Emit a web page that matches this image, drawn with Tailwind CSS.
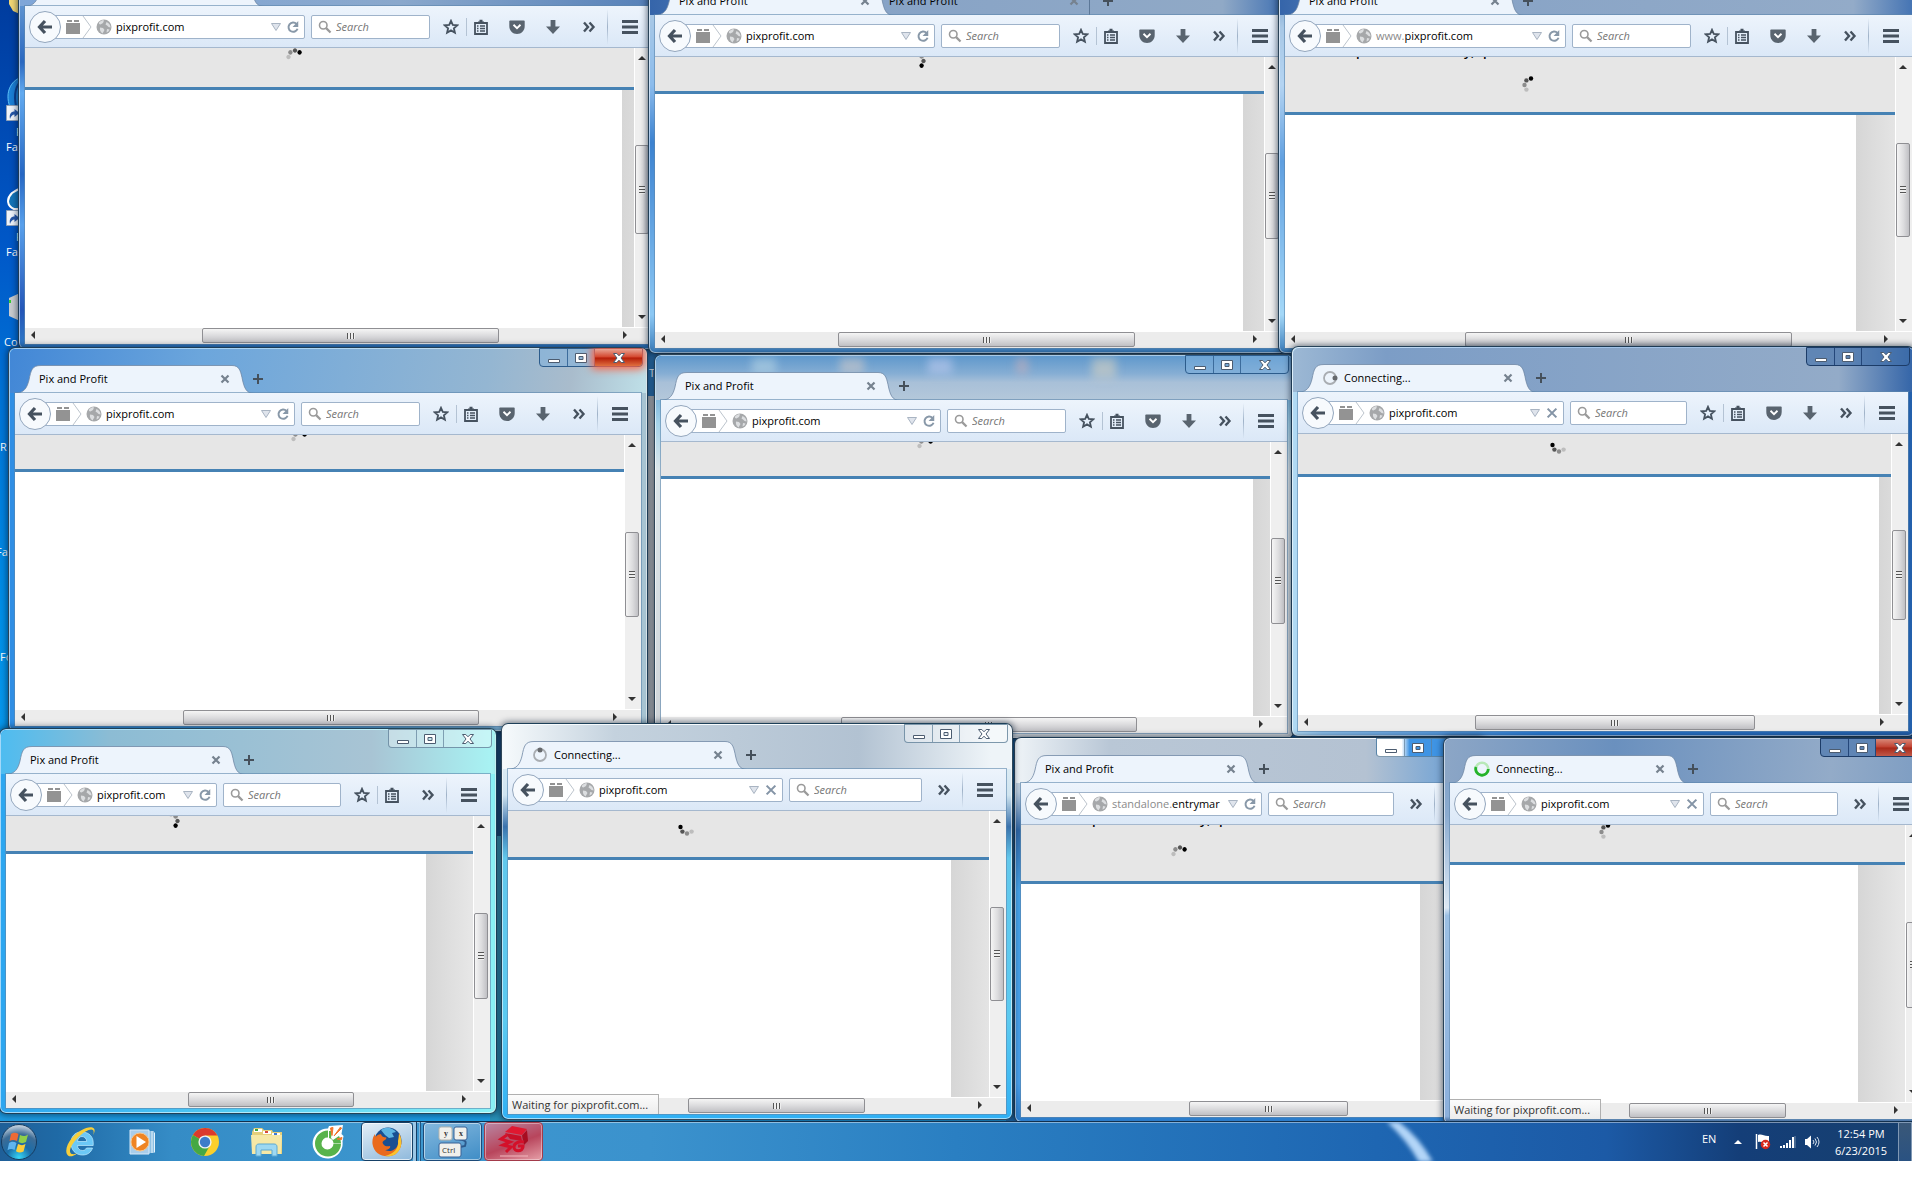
<!DOCTYPE html>
<html lang="en">
<head>
  <meta charset="utf-8">
  <title>Desktop</title>
  <script src="https://cdn.jsdelivr.net/npm/@tailwindcss/browser@4"></script>
</head>
<body class="h-screen flex flex-col pr-2 pb-[39px] bg-white overflow-hidden text-[11px] leading-4 text-black font-['Open_Sans','Noto_Sans',sans-serif]">

  <svg class="hidden">
    <symbol id="back" viewBox="0 0 16 16"><path d="M8 2 2.500 8 8 14M3 8h12" fill="none" stroke="#46525f" stroke-width="3.200"/></symbol>
    <symbol id="addon" viewBox="0 0 14 14"><path d="M0 3h14v11H0zM1 0h5v2H1zM8 0h5v2H8z" fill="#939393"/></symbol>
    <symbol id="globe" viewBox="0 0 16 16"><circle cx="8" cy="8" r="7.500" fill="#a6a8aa"/><path d="M3 3.500c2-2 4-2.400 5-2L7 4 4.500 5.500 3 5zM10.500 3c2.500 1 4 3 4.100 5.500l-2-.5-1.600-1.500-1.500-1zM4 8.500l3 .5 1.500 2-2 3.500C4.500 13 3.500 11 4 8.500zM11 10l2.500.5c-.5 1.500-1.500 2.500-3 3z" fill="#dcdee0"/></symbol>
    <symbol id="drop" viewBox="0 0 12 10"><path d="M1.500 1.500h9L6 8.500z" fill="#dfe4ec" stroke="#a9b4c2"/></symbol>
    <symbol id="reload" viewBox="0 0 16 16"><path d="M12 4.500A5.300 5.300 0 1 0 13.200 10" fill="none" stroke="#8898a8" stroke-width="2.200"/><path d="M14 1v7H7.500z" fill="#8898a8"/></symbol>
    <symbol id="stop" viewBox="0 0 16 16"><path d="m3 3 10 10M13 3 3 13" stroke="#8494a6" stroke-width="2.400"/></symbol>
    <symbol id="lens" viewBox="0 0 16 16"><circle cx="6" cy="6" r="4.300" fill="none" stroke="#9a9a9a" stroke-width="1.800"/><path d="m9.300 9.300 5 5" stroke="#9a9a9a" stroke-width="2.600"/></symbol>
    <symbol id="star" viewBox="0 0 16 16"><path d="m8 1.800 1.800 4.100 4.500.4-3.400 3 1 4.400L8 11.400l-3.900 2.300 1-4.400-3.400-3 4.500-.4z" fill="none" stroke="#46525f" stroke-width="1.800"/></symbol>
    <symbol id="clip" viewBox="0 0 16 16"><path d="M2 4h12v11H2z" fill="none" stroke="#46525f" stroke-width="1.800"/><path d="M5 5V2.500h1.500V.8h3v1.700H11V5z" fill="#46525f"/><path d="M4 7h1.500M7 7h5M4 9.500h1.500M7 9.500h5M4 12h1.500M7 12h5" stroke="#46525f" stroke-width="1.400"/></symbol>
    <symbol id="pocket" viewBox="0 0 16 16"><path d="M1.200 1.500h13.600c.6 0 .9.400.9.900V7c0 4.500-3.300 8-7.700 8S.3 11.500.3 7V2.400c0-.5.3-.9.900-.9z" fill="#59646f"/><path d="m4.500 5.800 3.500 3.300 3.500-3.300" fill="none" stroke="#fff" stroke-width="1.900"/></symbol>
    <symbol id="down" viewBox="0 0 16 16"><path d="M5.600 1h4.800v6.500H15l-7 7.500-7-7.500h4.600z" fill="#59646f"/></symbol>
    <symbol id="more" viewBox="0 0 16 16"><path d="m3 3.500 4 4.500-4 4.500M8.500 3.500l4 4.500-4 4.500" fill="none" stroke="#46525f" stroke-width="2.400"/></symbol>
    <symbol id="menu" viewBox="0 0 18 16"><path d="M1 2.500h16M1 8h16M1 13.500h16" stroke="#46525f" stroke-width="2.800"/></symbol>
    <symbol id="tabx" viewBox="0 0 10 10"><path d="m1.500 1.500 7 7M8.500 1.500l-7 7" stroke="#76828f" stroke-width="2.200"/></symbol>
    <symbol id="plus" viewBox="0 0 12 12"><path d="M6 1v10M1 6h10" stroke="#45505b" stroke-width="2"/></symbol>
    <symbol id="tab" viewBox="0 0 240 29"><path d="M0 28.500C9 28 12 23 14 15 16 5 17 .5 26 .5h191c7 0 8.500 5 10 12 2 10 4 16 12 16z" fill="#edf4fc" stroke="#7088a4" stroke-width=".8"/><path d="M1 28h238v1H1z" fill="#e9f2fb"/></symbol>
    <symbol id="capmin" viewBox="0 0 14 12"><path d="M1.500 7.500h11v3h-11z" fill="#fff" stroke="#4c5c70"/></symbol>
    <symbol id="capmax" viewBox="0 0 14 12"><path d="M1.500 1.500h11v9h-11zM5 4.500v3h4v-3z" fill="#fff" fill-rule="evenodd" stroke="#4c5c70"/></symbol>
    <symbol id="capx" viewBox="0 0 14 12"><path d="M1.500 1.500h3.300L7 3.800l2.200-2.300h3.300L9 6l3.500 4.500H9.200L7 8.200l-2.200 2.300H1.500L5 6z" fill="#fff" stroke="#4c5c70"/></symbol>
    <symbol id="shortcut" viewBox="0 0 16 16"><path d="M.5.5h15v15H.5z" fill="#eef3fa" stroke="#8fa0b8"/><path d="M4 14C3 9 5 6.500 8.500 6.500V4l5 4-5 4V9.500C6.500 9.500 5 11 4 14z" fill="#2456a8"/></symbol>
  </svg>

  <main id="desktop" class="relative flex-1 overflow-hidden bg-[linear-gradient(180deg,#003c9e_0%,#0058c8_22%,#0072d6_35%,#008fe8_55%,#0a9cf0_70%,#1c9ae0_100%)]">
    <!-- shortcuts whose names show past the windows -->
    <svg class="absolute left-2 top-0" width="14" height="16" viewBox="0 0 14 16"><path d="M1 0h13v15L5 11 1 4z" fill="#f2d774"/></svg>
    <svg class="absolute left-1.5 top-[76px]" width="18" height="32" viewBox="0 0 18 32"><path d="M18 1C6 2-2 16 4 31h14z" fill="#1b7fd6" stroke="#5cc0f8"/><path d="M16 4C9 10 8 20 10 30" fill="none" stroke="#0a3f90" stroke-width="2"/></svg>
    <svg class="absolute left-1.5 top-[105px] size-4"><use href="#shortcut"/></svg>
    <p class="absolute left-4 top-[124px] text-white">F</p>
    <p class="absolute left-1.5 top-[139px] text-white">Fa</p>
    <svg class="absolute left-1.5 top-[186px]" width="18" height="24" viewBox="0 0 18 24"><path d="M18 1C12 3 9 5 6 7c-6 6-5 13 2 16h10z" fill="#1274b8" stroke="#fff" stroke-width="2"/></svg>
    <svg class="absolute left-1.5 top-[210px] size-4"><use href="#shortcut"/></svg>
    <p class="absolute left-4 top-[229px] text-white">F</p>
    <p class="absolute left-1.5 top-[244px] text-white">Fa</p>
    <svg class="absolute left-2 top-[292px]" width="14" height="30" viewBox="0 0 14 30"><path d="M1 6 12 1v28L1 24z" fill="#c9cccf"/><path d="M2 8v3" stroke="#3c3" stroke-width="2"/></svg>
    <p class="absolute left-1 top-[334px] text-white">Co</p>
    <p class="absolute left-0 top-[439px] text-white">R</p>
    <p class="absolute -left-1 top-[544px] text-white">Fa</p>
    <p class="absolute left-0 top-[649px] text-white">Fo</p>

    <!-- edges of the windows lying underneath -->
    <div class="absolute left-[640px] top-[349px] w-[660px] h-[392px] bg-[#b4b6b8] border-t-[47px] border-[#2c71ad]"></div>
    <p class="absolute left-[649px] top-[365px] text-white">T</p>
    <div class="absolute left-[490px] top-[732px] w-8 h-[104px] bg-[#1d4c78]"></div>
    <div class="absolute left-[490px] top-[836px] w-8 h-[300px] bg-[linear-gradient(#3f9cb8,#2791b8)]"></div>
    <div class="absolute left-[1006px] top-[739px] w-4 h-[382px] bg-[#1f6cae]"></div>
    <div class="absolute left-[1290px] top-[731px] w-[630px] h-4 bg-[#1c78d8]"></div>
  </main>

  <footer class="flex h-10 shrink-0 items-stretch overflow-hidden border-t border-[#12304e] shadow-[inset_0_1px_0_#ffffff70] text-white bg-[linear-gradient(90deg,#1f5f98_0,#1f6aa6_3%,#358cc6_9%,#3d97cf_22%,#3b92cd_34%,#2a7fc2_50%,#1e66b2_72%,#1c5aa6_84%,#143e78_91%,#17406f_100%)]">
    <nav class="flex items-stretch">
      <button class="w-[50px]" aria-label="Start">
        <svg width="38" height="38" viewBox="0 0 38 38">
          <defs><radialGradient id="orb" cx=".5" cy=".95" r=".9"><stop offset="0" stop-color="#35d8f8"/><stop offset=".4" stop-color="#1a6ca8"/><stop offset=".75" stop-color="#3d6c96"/><stop offset="1" stop-color="#b8c8d8"/></radialGradient></defs>
          <circle cx="19" cy="19" r="17.500" fill="url(#orb)" stroke="#163c60"/>
          <path d="M11 11c3-2 5-1.500 7.500 0l-1.500 7c-3-1.500-5-1.500-7.500 0z" fill="#ee6a35"/>
          <path d="M20 12c3 1.500 5 1.500 8-.5l-2 7.500c-3 1.500-5 1.500-7.500 0z" fill="#8fcf4a"/>
          <path d="M9 20c3-1.800 5-1.500 7.500 0l-2 7c-2.500-1.500-4.500-1.500-7 .3z" fill="#5fb4ee"/>
          <path d="M18 21c3 1.500 5 1.500 7.500 0l-2 7.500c-3 1.500-5 1.200-7.500-.3z" fill="#fbcd3b"/>
        </svg>
      </button>
      <button class="w-[62px] grid place-items-center" aria-label="Internet Explorer">
        <svg width="32" height="32" viewBox="0 0 32 32"><path d="M16.500 6C9 6 6 11.500 6 17c0 7 4.500 12 11.500 12 5 0 8.500-2.500 10-7h-6c-1 1.800-2.200 2.500-4 2.500-3 0-5-2-5-5h15.700C29 11 24.500 6 16.500 6zm-4 9.500c.3-3 2-5 4.500-5s4.600 2 4.700 5z" fill="#6cc8f6" stroke="#c2ecff" stroke-width=".7"/><path d="M29 2.500C25-1 14 4 7 12 1.500 18.500-.5 26 3 29.500c2 1.800 6 .5 9-2-3 1-5.500 1-6.500-.5-2-3 2-10 8-16S26 2 28 4c1 1 .8 3 .3 5 1.300-2.500 1.800-5 .7-6.500z" fill="#f7cf3c"/></svg>
      </button>
      <button class="w-[61px] grid place-items-center" aria-label="Media Player">
        <svg width="28" height="28" viewBox="0 0 28 28"><path d="M5 3h20v22H5z" fill="#8cbfe2"/><path d="M23 3v22M25.500 4.500v20" stroke="#e5f3fc"/><path d="M1 2h19v24H1z" fill="#a9cdea" stroke="#d6eafa"/><circle cx="11" cy="14" r="9" fill="#ef8423" stroke="#f8c78d"/><path d="M7.500 8v12l9.500-6z" fill="#fff"/></svg>
      </button>
      <button class="w-[63px] grid place-items-center" aria-label="Chrome">
        <svg width="30" height="30" viewBox="0 0 30 30"><circle cx="15" cy="15" r="14" fill="#fbcf2b"/><path d="M15 15 2.900 8A14 14 0 0 1 27.400 8.500H15z" fill="#dc3a2c"/><path d="M2.900 8A14 14 0 0 0 14 29l6.200-11L15 15z" fill="#45a845"/><circle cx="15" cy="15" r="6.600" fill="#f2f2f2"/><circle cx="15" cy="15" r="5.200" fill="#3d7cc9"/></svg>
      </button>
      <button class="w-[61px] grid place-items-center" aria-label="Explorer">
        <svg width="34" height="32" viewBox="0 0 34 32"><path d="M2 6 4 2h8l2 2h8l1 2h9v22H2z" fill="#e5cf7a"/><path d="M4 3h8v3H4zM13 5h8v3h-8zM22 7h8v3h-8z" fill="#fff"/><path d="M5 3h3v2H5z" fill="#3da63d"/><path d="M15 5h3v2h-3z" fill="#d84a3c"/><path d="M24 7h3v2h-3z" fill="#3d7ad8"/><path d="M1 9h31l-1 19H2z" fill="#f6e8a6"/><path d="M6 30V21c0-2 1-3 3-3h15c2 0 3 1 3 3v9h-5v-6H11v6z" fill="#9dd8f2" stroke="#5ca9d2"/></svg>
      </button>
      <button class="w-[64px] grid place-items-center" aria-label="Coc Coc">
        <svg width="34" height="34" viewBox="0 0 34 34"><path d="M16 3.500 17 1l14-1-1.500 9 2 2-1 5.500A15 15 0 1 1 16 3.500z" fill="#fff"/><path d="M16 5.500A13 13 0 1 0 29 18.500h-7.500A6 6 0 1 1 16 12.500z" fill="#58b34b"/><path d="M17 6v7a6 6 0 0 1 4.500 5H29a13 13 0 0 0-2-7l-6 4-2-2 1-7z" fill="#58b34b"/><path d="m18.500 3 2.500-.5-1 8zM28.500 2l1 1.500L22 11zM25 14l5-1.500-.5 2z" fill="#f1762b" stroke="#f1762b"/><circle cx="16" cy="18.500" r="3" fill="#fff"/></svg>
      </button>
      <button class="w-[52px] grid place-items-center rounded-sm border border-[#164066] bg-[linear-gradient(160deg,#e4eef6,#8fb9dc)] shadow-[inset_0_0_0_1px_#ffffffb0]" aria-label="Firefox">
        <svg width="32" height="32" viewBox="0 0 32 32"><circle cx="17" cy="15" r="13.500" fill="#194f92"/><path d="M10 4c5-4 12-2 15 2l-4 1 2 4-5 1-4-3z" fill="#5db4e2"/><path d="M28 7c4 8 3 17-4 21.500C15 33 3 29 1.500 18 1 13 2.500 10 4 8c0 1.500.3 2 .8 2.800C6 9 8 8 10 8.300c1 1.700 1 2.700 3.500 2.900C16 11.300 16 12 14 14c-2 1-3 2-2 3.700 1 2 4 3.300 7 2.300 1 2-2 4-5 4 6 3 12-1 13-6 1-4 .5-7 1-11z" fill="#ea6a1d"/><path d="M28 7c4 8 3 17-4 21.500-3 1.700-7 2.100-10 1.500 9-2 14-8 13-15 .8-3 1-5 1-8z" fill="#fac32d"/></svg>
      </button>
      <div class="mr-0.5 flex gap-0.5"><span class="w-1 border-r border-[#143d66] bg-[#9cc6e4]"></span><span class="w-0.5 border-r border-[#1f5580] bg-[#7fb4dc]"></span></div>
      <button class="w-[59px] grid place-items-center rounded-sm border border-[#1d4a78] bg-[linear-gradient(160deg,#84b8de,#3f8dc6)] shadow-[inset_0_0_0_1px_#ffffff80]" aria-label="Keyboard">
        <svg width="32" height="32" viewBox="0 0 32 32" font-family="Liberation Serif" font-size="8" font-weight="bold" fill="#333"><path d="M22 13c6 2 8 1 6 7l-5 1" fill="none" stroke="#2c5a8c" stroke-width="2"/><rect x="2" y="1" width="13" height="13" rx="2" fill="#f0f0ec" stroke="#b4b4ae"/><rect x="17" y="1" width="13" height="13" rx="2" fill="#f0f0ec" stroke="#3a6396"/><rect x="2" y="17" width="22" height="14" rx="2" fill="#f0f0ec" stroke="#3a6396"/><text x="7" y="10">y</text><text x="22" y="10">x</text><text x="5" y="27" font-family="Open Sans" font-weight="400">Ctrl</text></svg>
      </button>
      <button class="ml-0.5 w-[59px] grid place-items-center rounded-sm border border-[#a33a4a] bg-[linear-gradient(160deg,#b888a4,#b8455c_55%,#e6a0a8)] shadow-[inset_0_0_0_1px_#ffffff60]" aria-label="3G">
        <svg width="34" height="34" viewBox="0 0 34 34"><path d="M8 7 15 1l15 3-5 6z" fill="#e01830"/><path d="M25 10.500 30 5l1 11-4 4z" fill="#a80c20"/><path d="M8 8l16 3 1 5-12-2z" fill="#c81028"/><path d="M10 10 4 14l9 3-7 3 8 2-5 5" fill="none" stroke="#d4102a" stroke-width="3"/><path d="M27 17c-5-1-10 1-10 5 0 5 8 5 9 0v-1h-5" fill="none" stroke="#d4102a" stroke-width="3"/><path d="M3 31h28" stroke="#f2b6bd"/></svg>
      </button>
    </nav>
    <div class="relative flex-1">
      <!-- wallpaper ray showing through the glass -->
      <svg class="absolute left-[836px] top-0 h-10 w-20 blur-[2px]" viewBox="0 0 80 40"><path d="M8 0h12q20 15 34 40H40Q28 18 8 0z" fill="#b4d6f8"/></svg>
    </div>
    <div class="flex items-center">
      <button class="w-6 text-left -mt-1.5">EN</button>
      <button class="w-6 grid place-items-center" aria-label="Show hidden icons"><svg width="10" height="6" viewBox="0 0 10 6"><path d="M1 5h8L5 1z" fill="#fff"/></svg></button>
      <button class="w-[26px] grid place-items-center" aria-label="Action Center"><svg width="16" height="17" viewBox="0 0 16 17"><path d="M1.500 1v15" stroke="#fff" stroke-width="1.500"/><path d="M3 2c4-1.500 6 1.500 11 1v7c-5 .5-7-2-11-1z" fill="#fff"/><circle cx="10.500" cy="11.500" r="4.700" fill="#d8281c"/><path d="m8.500 9.500 4 4M12.500 9.500l-4 4" stroke="#fff" stroke-width="1.500"/></svg></button>
      <button class="w-6 grid place-items-center" aria-label="Network"><svg width="16" height="14" viewBox="0 0 16 14"><path d="M0 11h2v2H0zM3 10h2v3H3zM6 8h2v5H6zM9 5h2v8H9z" fill="#fff"/><path d="M12 2h2v11h-2z" fill="#fff"/><path d="M15 1v12" stroke="#7890ac"/></svg></button>
      <button class="w-6 grid place-items-center" aria-label="Volume"><svg width="16" height="14" viewBox="0 0 16 14"><path d="M1 4h2l4-3.500v13L3 10H1z" fill="#fff"/><path d="M9 5q2 2 0 4M11 3.500q3 3.500 0 7M13 2q4 5 0 10" fill="none" stroke="#dfe8f2"/></svg></button>
      <time class="w-[74px] text-center leading-[17px]">12:54 PM<br>6/23/2015</time>
      <button class="w-3.5 h-10 border border-[#8098b4] bg-[linear-gradient(#3a5878,#2a5282)]" aria-label="Show desktop"></button>
    </div>
  </footer>

<script>
const LIGHT_CAPTION = "border-[#5f7f98]/80 bg-white/35 divide-[#5f7f98]/70";
const DARK_CAPTION = "border-[#1c3c68] bg-[#3f6ea8]/60 divide-[#24477a]";
const SKY_CAPTION = "border-[#2c5c8c] bg-[#7cb0de]/50 divide-[#3c6c9c]";

// l/t/r/b are the client area, t being the toolbar's top edge.
// bar: bottom of the grey header, page: right edge of the white page,
// h/v: scroll thumb ranges, dots: spinner centre and turn
const windows = [
  { l: 25, t: 6, r: 651, b: 344, bar: 87, page: 622, h: [202, 499], v: [145, 234], dots: [295, 57, 45], search: 119, tabs: [""], icons: 5,
    caption: DARK_CAPTION, frame: "bg-[linear-gradient(180deg,#6fa0d8_0,#5d92d0_12%,#2a68c0_26%,#62aaf0_34%,#2667c4_55%,#58a0ec_68%,#2456b8_90%,#2f7cc8_100%)]", glass: "bg-[linear-gradient(90deg,#7fa6d8,#8aa8cc_60%,#5580b8)]" },
  { l: 655, t: 15, r: 1281, b: 348, bar: 91, page: 1243, h: [838, 1135], v: [153, 239], dots: [917, 61, 135], search: 119, tabs: ["Pix and Profit", "Pix and Profit"], icons: 5,
    caption: DARK_CAPTION, frame: "bg-[linear-gradient(180deg,#5c88bc_0,#a8c8e6_12%,#8cbcec_30%,#3c82d0_45%,#8cc8f4_90%,#3a7cba_100%)]", glass: "bg-[linear-gradient(90deg,#3565aa,#87a3c6_35%,#90a9c6_90%,#3f70b2)]" },
  { l: 1285, t: 15, r: 1912, b: 348, bar: 112, page: 1856, h: [1465, 1792], v: [143, 237], dots: [1531, 85, 0], search: 119, tabs: ["Pix and Profit"], icons: 5, host: "www.", note: true,
    caption: DARK_CAPTION, frame: "bg-[linear-gradient(180deg,#5c88bc_0,#a8c8e6_15%,#b4d4f2_30%,#5f9fe0_50%,#a4d8f8_90%,#3a7cba_100%)]", glass: "bg-[linear-gradient(90deg,#3565aa,#87a3c6_25%,#93abc8_90%,#3f70b2)]" },
  { l: 15, t: 393, r: 641, b: 726, bar: 469, page: 624, h: [183, 479], v: [532, 617], dots: [300, 439, 45], search: 119, tabs: ["Pix and Profit"], icons: 5, hot: true,
    caption: SKY_CAPTION, frame: "bg-[linear-gradient(90deg,#2f8ee4_0,#3a9ae0_40%,#a8c4d2_100%)]", glass: "bg-[linear-gradient(100deg,#4287d6_0,#6ca6dc_30%,#94b6d2_75%,#a9bccc_88%,#bfe0e8_100%)]" },
  { l: 661, t: 400, r: 1287, b: 733, bar: 476, page: 1253, h: [841, 1137], v: [538, 624], dots: [926, 446, 45], search: 119, tabs: ["Pix and Profit"], icons: 5, ghosts: true,
    caption: SKY_CAPTION, frame: "bg-[linear-gradient(180deg,#3a86c8_0,#a6d4ea_18%,#dce6ea_30%,#cfd4d8_100%)]", glass: "bg-[linear-gradient(180deg,#5f98cc_0,#86aed4_40%,#a8c0d8_60%,#b4c8da_100%)]" },
  { l: 1298, t: 392, r: 1908, b: 731, bar: 474, page: 1879, h: [1475, 1755], v: [530, 620], dots: [1559, 445, 270], search: 117, tabs: ["Connecting..."], icons: 5, load: 0,
    caption: DARK_CAPTION, frame: "bg-[linear-gradient(90deg,#b4dcf4_0,#8cc0ec_5%,#2a7cd4_40%,#2360ac_100%)]", glass: "bg-[linear-gradient(90deg,#9cb8d4_0,#7c9dc6_15%,#93abc8_88%,#3465a8_100%)]" },
  { l: 6, t: 774, r: 490, b: 1108, bar: 851, page: 426, h: [188, 354], v: [913, 999], dots: [171, 821, 135], search: 118, tabs: ["Pix and Profit"], icons: 2,
    caption: LIGHT_CAPTION, frame: "bg-[linear-gradient(90deg,#2ca6f0_0,#54ccf2_50%,#8cf2f6_100%)]", glass: "bg-[linear-gradient(90deg,#4ebcf0_0,#8cbcd4_22%,#a8c4d4_75%,#a8f4f4_100%)]" },
  { l: 1021, t: 783, r: 1478, b: 1117, bar: 881, page: 1420, h: [1189, 1348], v: [920, 1000], dots: [1180, 854, 45], search: 126, tabs: ["Pix and Profit"], icons: 0, host: "standalone.", url: "entrymar", note: true,
    caption: "border-[#5f7f98]/80 bg-[linear-gradient(90deg,#fff_0,#fff_24%,#3f94e4_32%,#3f94e4_100%)] divide-[#5f7f98]/70", frame: "bg-[linear-gradient(180deg,#e8eef2_0,#b8cadc_14%,#2f66a4_24%,#46a4ea_40%,#48a0ec_90%,#2a7ac8_100%)]", glass: "bg-[linear-gradient(90deg,#eef3f7_0,#b9c7d6_20%,#b4c2d2_75%,#7da8d4_90%)]" },
  { l: 508, t: 769, r: 1006, b: 1114, bar: 857, page: 951, h: [688, 865], v: [907, 1001], dots: [687, 827, 270], search: 133, tabs: ["Connecting..."], icons: 0, load: -90, status: true,
    caption: LIGHT_CAPTION, frame: "bg-[linear-gradient(180deg,#eef6fa_0,#cfe4f0_18%,#3a72ac_26%,#62c8ec_34%,#5ccaf0_75%,#30b0f4_100%)]", glass: "bg-[linear-gradient(90deg,#f6fafc_0,#c4d2de_22%,#b2c2d2_70%,#eef4f8_96%)]" },
  { l: 1450, t: 783, r: 1922, b: 1119, bar: 862, page: 1858, h: [1629, 1786], v: [922, 1008], dots: [1608, 832, 0], search: 128, tabs: ["Connecting..."], icons: 0, load: "green", status: true, red: true,
    caption: DARK_CAPTION, frame: "bg-[linear-gradient(180deg,#7c9cc4_0,#8cacd0_20%,#dce8f4_44%,#9cc0e4_46%,#8cb0dc_98%,#1d4a80_100%)]", glass: "bg-[linear-gradient(95deg,#8ca6c6_0,#6a90be_35%,#93abc8_80%,#7c9cc2_100%)]" },
];

const icon = (name, cls) => `<svg class="${cls}"><use href="#${name}"/></svg>`;
const tool = (name, label, slot) => `<button class="${slot} h-full grid place-items-center" aria-label="${label}">${icon(name, "size-4")}</button>`;
const loading = (w) => w.load !== undefined;

function loader(w) {
  if (!loading(w)) return "";
  if (w.load === "green") return `<svg class="size-4 mr-1.5" viewBox="0 0 16 16"><circle cx="8" cy="8" r="6.300" fill="none" stroke="#b8e8b8" stroke-width="2.600"/><path d="M14.300 8A6.300 6.300 0 1 1 2 6" fill="none" stroke="#25b32b" stroke-width="2.800"/></svg>`;
  return `<svg class="size-4 mr-1.5" viewBox="0 0 16 16"><g transform="rotate(${w.load} 8 8)"><circle cx="8" cy="8" r="6" fill="none" stroke="#a9adb2" stroke-width="1.800"/><circle cx="13" cy="8" r="2.500" fill="#66696d"/></g></svg>`;
}

function tab(w, title, i) {
  const shape = i === 0 ? icon("tab", "absolute left-0 bottom-0 w-[240px] h-[29px] -mb-px") : "";
  const slot = i === 0 ? "w-[225px] pl-6" : "w-[210px] pl-[9px] border-r border-[#5c7898]";
  return `<div class="relative ${slot} h-7 flex items-center">
    ${shape}
    <div class="relative flex flex-1 items-center pr-2.5">
      ${loader(w)}<span class="flex-1">${title}</span>
      <button aria-label="Close tab">${icon("tabx", "size-2.5")}</button>
    </div>
  </div>`;
}

function toolbar(w) {
  const url = w.url || "pixprofit.com";
  return `<div class="relative flex items-center h-[42px] pt-px border-b border-[#a5b8ce] bg-[linear-gradient(#edf4fc,#dbe8f7)]">
    <button class="relative z-10 ml-1 size-8 shrink-0 grid place-items-center rounded-full border border-[#93a6bd] bg-[#f7fafd]" aria-label="Back">${icon("back", "size-4")}</button>
    <div class="flex flex-1 min-w-0 items-center h-6 -ml-2 pl-3 pr-1 bg-white border border-[#9fb3ca] rounded-xs">
      ${icon("addon", "size-3.5 shrink-0")}
      <svg class="w-2.5 h-[22px] shrink-0 ml-0.5" viewBox="0 0 10 22"><path d="M1 0l8 11-8 11" fill="none" stroke="#bcc4cc"/></svg>
      ${icon("globe", "size-4 shrink-0 ml-1 mr-1")}
      ${w.host ? `<span class="text-[#8a8a8a]">${w.host}</span>` : ""}
      <input class="flex-1 min-w-0 outline-none bg-transparent" aria-label="Address" value="${url}">
      <button class="mx-1 shrink-0" aria-label="History">${icon("drop", "w-3 h-2.5")}</button>
      <button class="shrink-0" aria-label="Reload">${icon(loading(w) ? "stop" : "reload", "size-3.5")}</button>
    </div>
    <label class="flex items-center shrink-0 h-6 ml-1.5 pl-1.5 gap-1 bg-white border border-[#9fb3ca] rounded-xs" style="width:${w.search}px">
      ${icon("lens", "size-3.5 shrink-0")}
      <input class="w-full min-w-0 outline-none italic placeholder:text-[#757575]" placeholder="Search" aria-label="Search">
    </label>
    <div class="flex items-center h-full shrink-0 ${w.icons ? "pl-1.5" : "pl-1"}">
      ${w.icons ? tool("star", "Bookmark", "w-[30px]") + `<span class="w-px h-[18px] bg-[#b4c3d4]"></span>` + tool("clip", "Bookmarks list", "w-7 mr-1") : ""}
      ${w.icons > 2 ? tool("pocket", "Pocket", "w-9") + tool("down", "Downloads", "w-9") : ""}
      ${tool("more", "More tools", "w-9")}
      <span class="w-px h-9 bg-[linear-gradient(transparent,#9fb2c8,transparent)]"></span>
      <button class="w-[43px] grid place-items-center" aria-label="Menu">${icon("menu", "w-[18px] h-4")}</button>
    </div>
  </div>`;
}

function render(w) {
  const top = w.t + 42;
  const [cx, cy, turn] = w.dots;
  const closeBg = w.hot ? "bg-[linear-gradient(#e8a494,#d4452c_48%,#b41c08_52%,#e07040)] shadow-[0_0_8px_3px_#ff6040]" : w.red ? "bg-[linear-gradient(#d88878,#c04030_48%,#a82818_52%,#c05848)]" : "";
  return `<section class="absolute flex flex-col px-1.5 pb-[5px] rounded-[7px] overflow-hidden border border-[#1c3448]/90 shadow-[0_0_6px_1px_#00142890,inset_0_0_0_1px_#ffffff90] ${w.frame}"
      style="left:${w.l - 7}px;top:${w.t - 46}px;width:${w.r - w.l + 14}px;height:${w.b - w.t + 52}px">
    <header class="relative flex h-11 shrink-0 -mx-[5px] mt-px px-[5px] items-end rounded-t-md ${w.glass}">
      ${w.ghosts ? `<div class="absolute inset-x-16 top-0.5 flex justify-around blur-[4px] opacity-50"><i class="w-6 h-4 bg-[#c0dce8]"></i><i class="w-6 h-4 bg-[#dccfc8]"></i><i class="w-6 h-4 bg-[#c8d0f4]"></i><i class="w-3 h-4 bg-[#d0b0b8]"></i><i class="w-6 h-5 bg-[#e4d8c0]"></i><i class="size-4"></i></div>` : ""}
      ${w.tabs.map((title, i) => tab(w, title, i)).join("")}
      <button class="ml-3 mb-2" aria-label="New tab">${icon("plus", "size-3")}</button>
      <div class="absolute right-[3px] -top-px flex h-[19px] divide-x border rounded-b-[4px] ${w.caption}">
        <button class="w-7 grid place-items-center" aria-label="Minimize">${icon("capmin", "w-3.5 h-3")}</button>
        <button class="w-[27px] grid place-items-center" aria-label="Maximize">${icon("capmax", "w-3.5 h-3")}</button>
        <button class="w-[47px] grid place-items-center rounded-br-[3px] ${closeBg}" aria-label="Close">${icon("capx", "w-3.5 h-3")}</button>
      </div>
    </header>
    <div class="relative flex flex-1 flex-col min-h-0 ring-1 ring-[#5c86ac]/60 bg-[#ededed]">
      ${toolbar(w)}
      <div class="flex flex-1 min-h-0">
        <div class="flex flex-1 flex-col relative overflow-hidden">
          <div class="bg-[#e6e6e6] border-b-[3px] border-[#4682b4] box-content" style="height:${w.bar - top}px">
            ${w.note ? `<p class="absolute left-[70px] -top-3.5 flex text-[13px] font-semibold"><span class="w-[109px] pl-px">p</span><span class="w-[19px]">y,</span><span>p</span></p>` : ""}
            <svg class="absolute size-5 blur-[0.4px]" style="left:${cx - w.l - 10}px;top:${cy - top - 10}px" viewBox="-10 -10 20 20"><g transform="rotate(${turn})"><circle cy="-6.500" r="2.200"/><circle cx="-4.600" cy="-4.600" r="2.200" fill="#555"/><circle cx="-6.500" r="2.200" fill="#8c8c8c"/><circle cx="-4.600" cy="4.600" r="2.200" fill="#bdbdbd"/></g></svg>
          </div>
          <div class="flex flex-1">
            <div class="bg-white" style="width:${w.page - w.l}px"></div>
            <div class="flex-1 bg-[linear-gradient(90deg,#d6d6d6,#e6e6e6_44px)]"></div>
          </div>
        </div>
        <div class="relative w-[17px] border-l border-white bg-[#efefef]">
          <svg class="absolute left-[3px] top-2 w-2 h-1" viewBox="0 0 8 4"><path d="M0 4h8L4 0z" fill="#333"/></svg>
          <div class="absolute left-0 right-0.5 grid place-items-center border border-[#8f8f93] rounded-xs bg-[linear-gradient(90deg,#f5f5f5,#dcdcde_55%,#c0c0c4)]" style="top:${w.v[0] - top}px;height:${w.v[1] - w.v[0]}px">
            <div class="w-1.5 h-2 bg-[repeating-linear-gradient(180deg,#555_0_1px,#eee_1px_3px)]"></div>
          </div>
          <svg class="absolute left-[3px] bottom-2 w-2 h-1" viewBox="0 0 8 4"><path d="M0 0h8L4 4z" fill="#333"/></svg>
        </div>
      </div>
      <div class="relative flex h-[17px] shrink-0 items-center border-t border-white bg-[#ececec] pl-1.5 pr-6 pb-0.5">
        <svg class="w-1 h-2" viewBox="0 0 4 8"><path d="M4 0v8L0 4z" fill="#333"/></svg>
        <div class="absolute top-0 bottom-px grid place-items-center border border-[#8f8f93] rounded-xs bg-[linear-gradient(#f5f5f5,#dcdcde_50%,#c0c0c4)]" style="left:${w.h[0] - w.l}px;width:${w.h[1] - w.h[0]}px">
          <div class="w-2 h-1.5 bg-[repeating-linear-gradient(90deg,#555_0_1px,#eee_1px_3px)]"></div>
        </div>
        <svg class="ml-auto w-1 h-2" viewBox="0 0 4 8"><path d="M0 0v8l4-4z" fill="#333"/></svg>
      </div>
      ${w.status ? `<output class="absolute left-0 bottom-0 h-5 pl-1 pr-2.5 leading-[19px] text-[#333] border-t border-r border-[#b0b0b0] bg-[linear-gradient(#fcfcfc,#ececec)]">Waiting for pixprofit.com...</output>` : ""}
    </div>
  </section>`;
}

document.getElementById("desktop").insertAdjacentHTML("beforeend", windows.map(render).join(""));
</script>
</body>
</html>
